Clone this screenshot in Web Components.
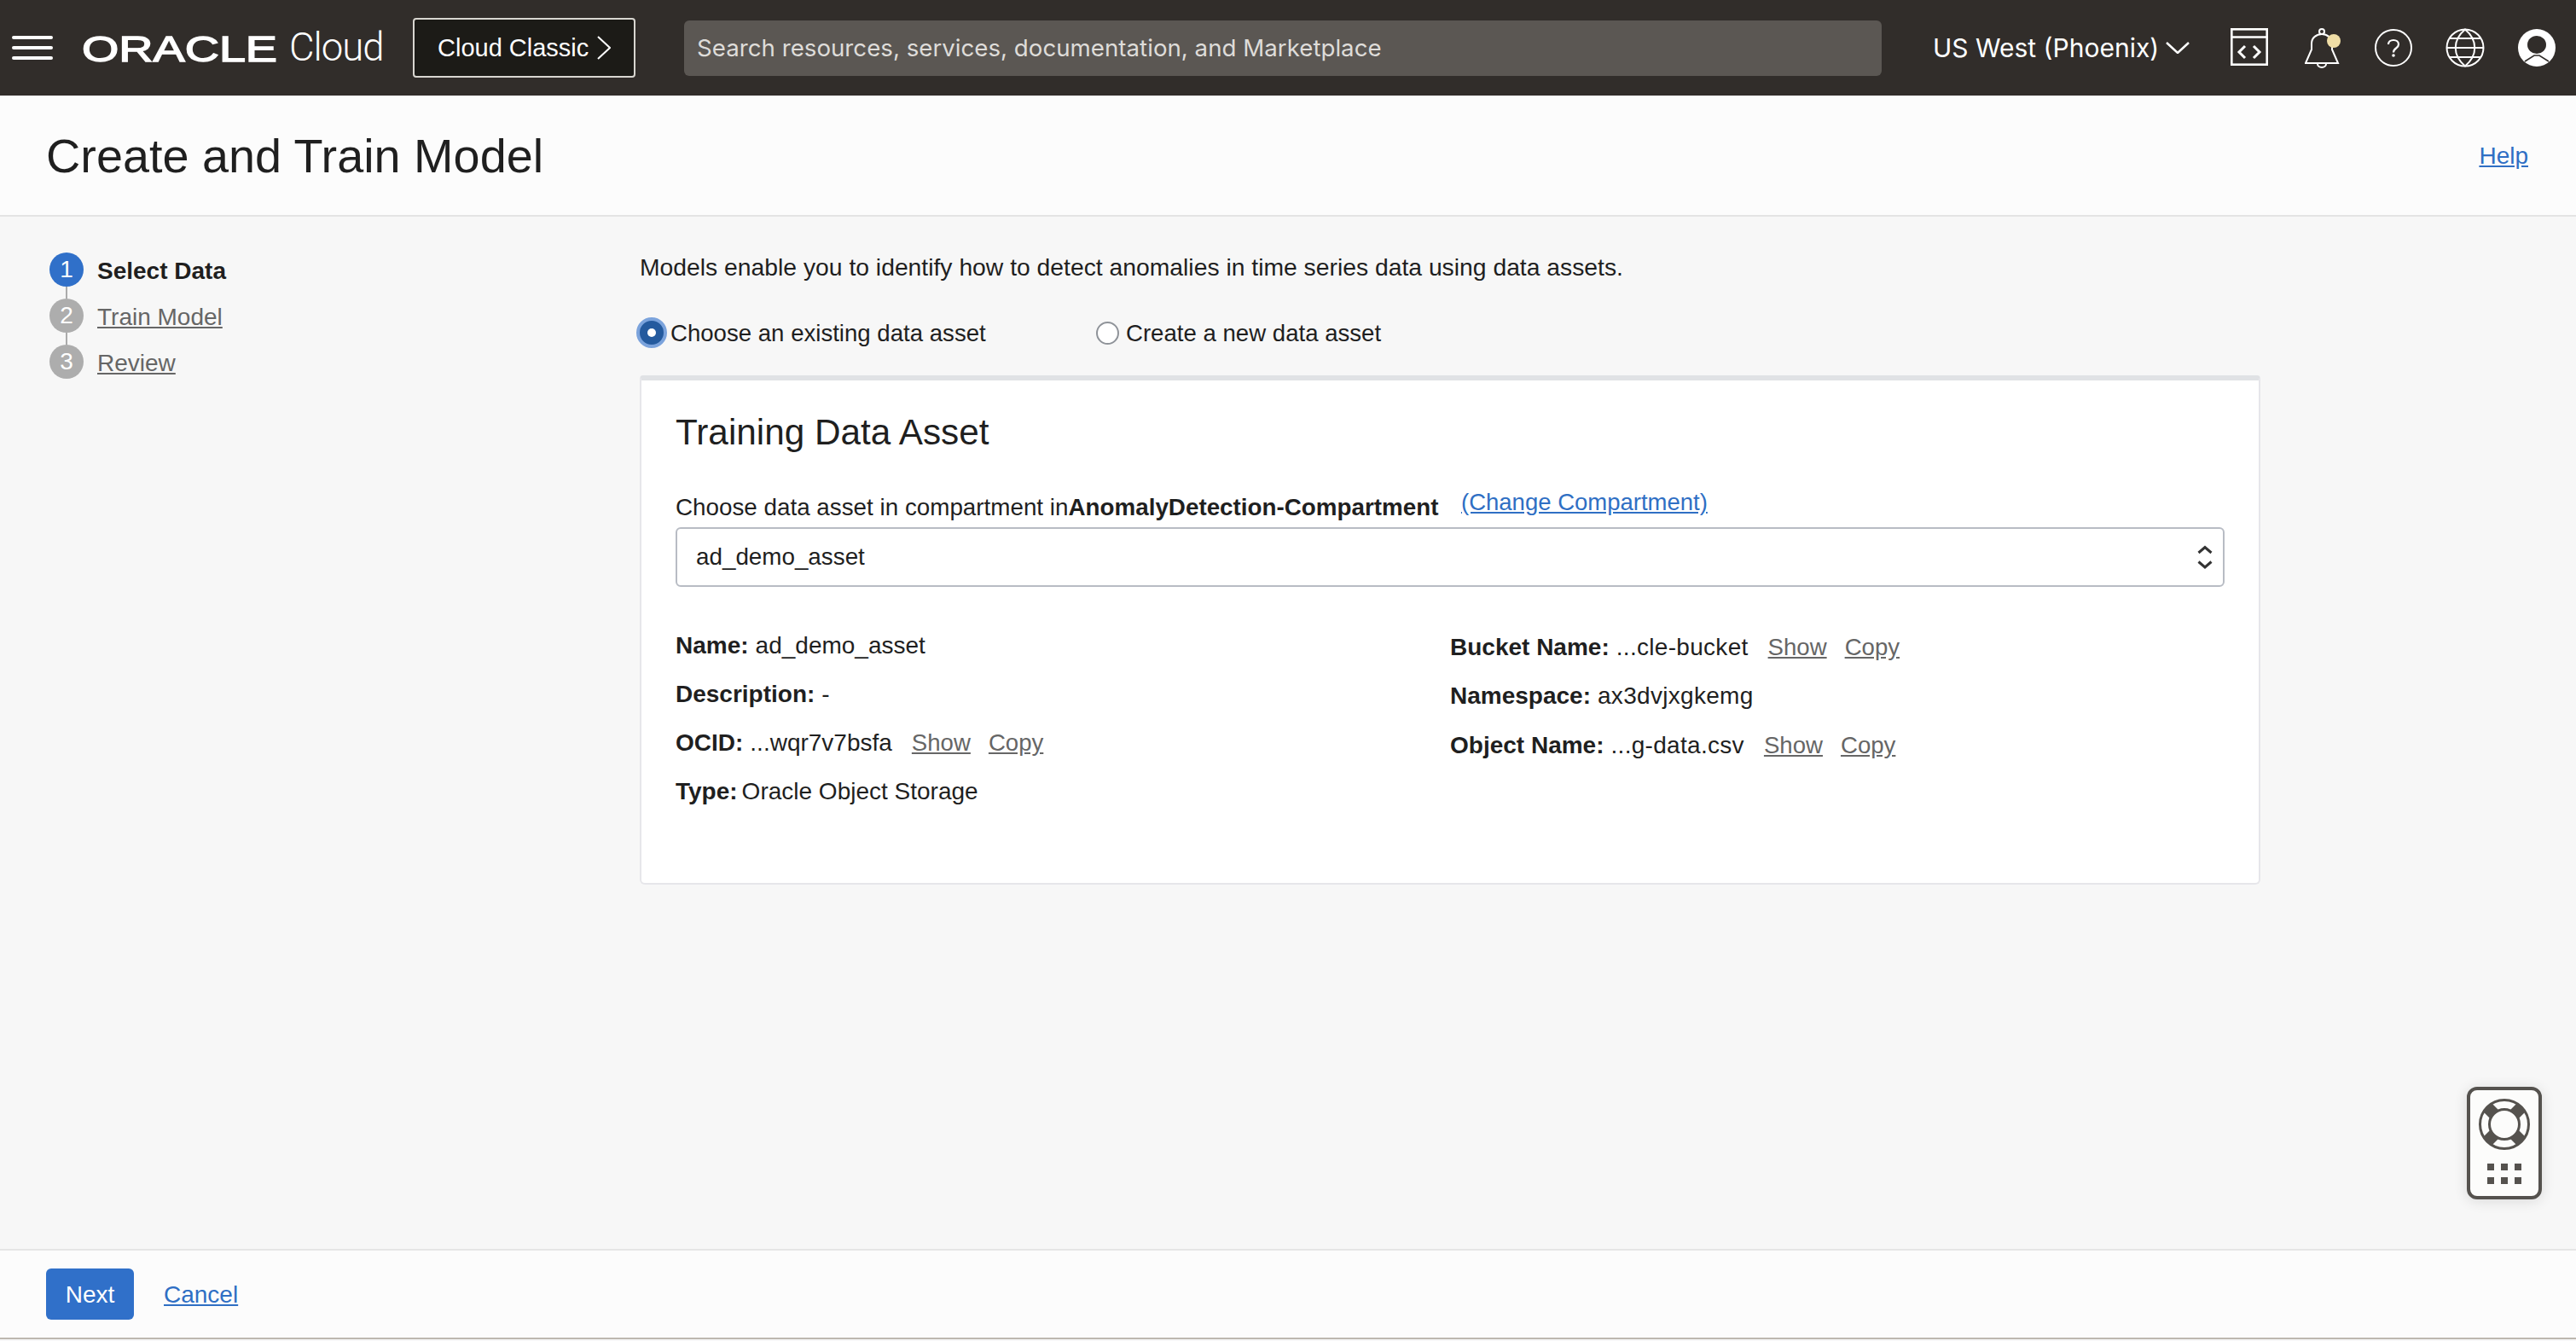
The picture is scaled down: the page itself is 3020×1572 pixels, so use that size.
<!DOCTYPE html>
<html lang="en">
<head>
<meta charset="utf-8">
<title>Create and Train Model</title>
<style>
html, body { margin: 0; height: 100%; }
body {
    display: flex;
    flex-direction: column;
    height: 1572px;
    overflow: hidden;
    background: #f7f7f7;
    color: #1f1f1f;
    font: 28px/1.2 "Liberation Sans", Arial, sans-serif;
}
</style>
</head>
<body>
<app-header></app-header>
<page-title heading="Create and Train Model"></page-title>
<wizard-layout>
    <wizard-steps slot="steps">
        <step-item num="1" label="Select Data" active></step-item>
        <step-item num="2" label="Train Model" connector></step-item>
        <step-item num="3" label="Review" connector></step-item>
    </wizard-steps>
    <data-form></data-form>
</wizard-layout>
<wizard-footer></wizard-footer>
<help-widget></help-widget>

<script>
class AppHeader extends HTMLElement {
    constructor() {
        super();
        this.attachShadow({mode: 'open'}).innerHTML = `<style>
:host {
    display: flex;
    align-items: center;
    flex: none;
    height: 112px;
    background: #312d2a;
    color: #fff;
    box-sizing: border-box;
    padding-left: 14px;
}
svg { display: block; flex: none; }
.logo { margin-left: 34px; overflow: visible; }
.cloud {
    margin-left: 8px;
    font: 300 45.5px/1 Roboto, sans-serif;
    letter-spacing: -1px;
    width: 132px;
}
.classic {
    display: flex;
    align-items: center;
    box-sizing: border-box;
    width: 261px;
    height: 70px;
    padding-left: 27px;
    background: #1c1b17;
    border: 2px solid #d8d6d0;
    border-radius: 4px;
    font-size: 29px;
    margin-left: 13px;
}
.classic svg { margin-left: 10px; }
.search {
    box-sizing: border-box;
    width: 1404px;
    height: 65px;
    margin-left: 57px;
    padding-left: 15px;
    display: flex;
    align-items: center;
    background: #5b5753;
    border-radius: 6px;
    color: #dedcd9;
    font: 27.7px Inter, sans-serif;
}
.region {
    margin-left: 60px;
    font: 30px Inter, sans-serif;
    width: 273px;
}
</style>
<svg width="48" height="28" viewBox="0 0 48 28"><g fill="#fff"><rect width="48" height="4" rx="2"/><rect y="12" width="48" height="4" rx="2"/><rect y="24" width="48" height="4" rx="2"/></g></svg>
<svg class="logo" width="235" height="44" viewBox="0 0 235 44"><text x="0" y="38" font-family="Liberation Sans" font-size="42" font-weight="400" stroke="#fff" stroke-width="1.4" fill="#fff" textLength="229" lengthAdjust="spacingAndGlyphs">ORACLE</text></svg>
<span class="cloud">Cloud</span>
<div class="classic">Cloud Classic<svg width="16" height="28" viewBox="0 0 16 28"><path d="M1 1l14 13L1 27" fill="none" stroke="#fff" stroke-width="2"/></svg></div>
<div class="search">Search resources, services, documentation, and Marketplace</div>
<span class="region">US West (Phoenix)</span>
<svg width="28" height="14" viewBox="0 0 28 14"><path d="M1 1l13 12L27 1" fill="none" stroke="#fff" stroke-width="2.5"/></svg>
<svg style="margin:-2px 0 0 48px" width="44" height="44" viewBox="0 0 44 44"><g fill="none" stroke="#fff" stroke-width="2.6"><rect x="1.3" y="1.3" width="41.4" height="41.4"/><path d="M1 10.5h42"/><path d="M17 21l-7 7 7 7M27 21l7 7-7 7" stroke-width="3"/></g></svg>
<svg style="margin-left:43px" width="44" height="48" viewBox="0 0 44 48"><g fill="none" stroke="#fff" stroke-width="2"><path d="M1 42L8 26V19C8 12 14 8 20 8S32 12 32 19V26L39 42Z"/><circle cx="20" cy="5" r="3"/><path d="M15 43a5 4 0 0 0 10 0"/></g><circle cx="34" cy="16" r="8" fill="#f0dea6"/></svg>
<svg style="margin-left:38px" width="44" height="44" viewBox="0 0 44 44"><circle cx="22" cy="22" r="21" fill="none" stroke="#fff" stroke-width="2"/><path d="M16 18c0-3 2.5-5 6-5s6 2 6 5c0 5-6 4-6 9.5" fill="none" stroke="#fff" stroke-width="2.2"/><circle cx="22" cy="31" r="1.8" fill="#fff"/></svg>
<svg style="margin-left:39px" width="46" height="46" viewBox="0 0 46 46"><g fill="none" stroke="#fff" stroke-width="2"><circle cx="23" cy="23" r="21.5"/><path d="M23 1.5C8 14 8 32 23 44.5C38 32 38 14 23 1.5Z"/><path d="M2 23h42M5 12h36M5 34h36"/></g></svg>
<svg style="margin-left:39px" width="44" height="44" viewBox="0 0 44 44"><circle cx="22" cy="22" r="22" fill="#fff"/><ellipse cx="22" cy="18.5" rx="11" ry="10.5" fill="#312d2a"/><path d="M8 38l11-7h6l11 7" fill="none" stroke="#312d2a" stroke-width="1.6"/></svg>`;
    }
}
customElements.define('app-header', AppHeader);

class PageTitle extends HTMLElement {
    connectedCallback() {
        this.attachShadow({mode: 'open'}).innerHTML = `<style>
:host {
    display: flex;
    align-items: center;
    justify-content: space-between;
    flex: none;
    box-sizing: border-box;
    height: 142px;
    padding: 2px 56px 0 54px;
    background: #fcfcfc;
    border-bottom: 2px solid #e4e4e4;
}
h1 { margin: 0; font-size: 55.8px; font-weight: 400; color: #1f1f1f; }
a { color: #2f6fc4; text-decoration: underline; }
</style>
<h1>${this.getAttribute('heading')}</h1>
<a>Help</a>`;
    }
}
customElements.define('page-title', PageTitle);

class WizardLayout extends HTMLElement {
    constructor() {
        super();
        this.attachShadow({mode: 'open'}).innerHTML = `<style>
:host {
    display: grid;
    grid-template-columns: 692px 1900px;
    flex: 1;
    padding: 42px 0 0 58px;
    min-height: 0;
}
</style>
<div><slot name="steps"></slot></div>
<div><slot></slot></div>`;
    }
}
customElements.define('wizard-layout', WizardLayout);

class WizardSteps extends HTMLElement {
    constructor() {
        super();
        this.attachShadow({mode: 'open'}).innerHTML = `<style>
:host { display: flex; flex-direction: column; }
</style><slot></slot>`;
    }
}
customElements.define('wizard-steps', WizardSteps);

class StepItem extends HTMLElement {
    connectedCallback() {
        const active = this.hasAttribute('active');
        this.attachShadow({mode: 'open'}).innerHTML = `<style>
:host { display: block; }
.line { width: 2px; height: 14px; margin-left: 19px; background: #ababab; }
.row { display: flex; align-items: center; height: 40px; }
.num {
    width: 40px;
    height: 40px;
    border-radius: 50%;
    background: ${active ? '#3070c9' : '#adadad'};
    color: #fff;
    text-align: center;
    line-height: 40px;
}
.label {
    margin-left: 16px;
    padding-top: 3px;
    font-weight: ${active ? 700 : 400};
    color: ${active ? '#1f1f1f' : '#666'};
    text-decoration: ${active ? 'none' : 'underline'};
}
</style>
${this.hasAttribute('connector') ? '<div class="line"></div>' : ''}
<div class="row"><span class="num">${this.getAttribute('num')}</span><span class="label">${this.getAttribute('label')}</span></div>`;
    }
}
customElements.define('step-item', StepItem);

class RadioOption extends HTMLElement {
    connectedCallback() {
        const checked = this.hasAttribute('checked');
        this.attachShadow({mode: 'open'}).innerHTML = `<style>
:host { display: inline-flex; align-items: center; font-size: 27.6px; }
.box { display: flex; justify-content: center; align-items: center; width: 36px; height: 36px; margin-right: 4px; }
.text { padding-top: 1px; }
.on {
    box-sizing: border-box;
    width: 36px;
    height: 36px;
    border-radius: 50%;
    background: #245a9e;
    border: 4px solid #7ba3dc;
    display: flex;
    justify-content: center;
    align-items: center;
}
.on i { width: 10px; height: 10px; border-radius: 50%; background: #fff; }
.off {
    box-sizing: border-box;
    width: 27px;
    height: 27px;
    border-radius: 50%;
    background: #fff;
    border: 2px solid #8f9399;
}
</style>
<span class="box">${checked ? '<span class="on"><i></i></span>' : '<span class="off"></span>'}</span><span class="text"><slot></slot></span>`;
    }
}
customElements.define('radio-option', RadioOption);

class ActionLink extends HTMLElement {
    constructor() {
        super();
        this.attachShadow({mode: 'open'}).innerHTML = `<style>
:host { display: inline-block; margin-left: 21px; color: #666; text-decoration: underline; font-size: 27.6px; }
:host(:first-of-type) { margin-left: 23px; }
</style><slot></slot>`;
    }
}
customElements.define('action-link', ActionLink);

class DetailRow extends HTMLElement {
    connectedCallback() {
        const gap = this.getAttribute('gap') || 8;
        this.attachShadow({mode: 'open'}).innerHTML = `<style>
:host { display: flex; align-items: center; height: var(--row-height, 57.5px); white-space: pre; }
b { margin-right: ${gap}px; }
span { letter-spacing: var(--value-spacing, 0); }
</style>
<b>${this.getAttribute('label')}</b><span>${this.getAttribute('value')}</span><slot></slot>`;
    }
}
customElements.define('detail-row', DetailRow);

class DataForm extends HTMLElement {
    constructor() {
        super();
        this.attachShadow({mode: 'open'}).innerHTML = `<style>
:host { display: block; }
p { margin: 0; height: 34px; line-height: 34px; font-size: 28.3px; }
.radios { display: flex; align-items: center; height: 36px; margin: 42px 0 32px -4px; }
.radios radio-option:first-child { width: 534px; }
.card {
    box-sizing: border-box;
    height: 597px;
    padding: 0 40px;
    background: #fff;
    border: 2px solid #e6e6ea;
    border-top: 6px solid #e0e2e5;
    border-radius: 4px 4px 6px 6px;
}
h2 { margin: 0; padding-top: 33.5px; height: 53px; font-size: 42.3px; line-height: 53px; font-weight: 400; }
.choose { display: flex; align-items: flex-end; height: 42px; margin-top: 38.5px; font-size: 27.8px; }
.choose .txt { line-height: 34px; width: 921px; padding-bottom: 1px; }
.choose a { color: #2f6fc4; text-decoration: underline; line-height: 34px; padding-bottom: 7px; font-size: 27.5px; }
.select {
    box-sizing: border-box;
    display: flex;
    align-items: center;
    justify-content: space-between;
    height: 70px;
    margin-top: 5px;
    padding: 0 12px 0 22px;
    border: 2px solid #b8bcc4;
    border-radius: 6px;
    background: #fff;
    font-size: 27.8px;
}
.select svg { display: block; }
.cols { display: grid; grid-template-columns: 908px 1fr; margin-top: 40px; }
.left { --row-height: 57px; }
.right { padding-top: 2px; --value-spacing: 0.3px; }
</style>
<p>Models enable you to identify how to detect anomalies in time series data using data assets.</p>
<div class="radios">
    <radio-option checked>Choose an existing data asset</radio-option>
    <radio-option>Create a new data asset</radio-option>
</div>
<div class="card">
    <h2>Training Data Asset</h2>
    <div class="choose">
        <span class="txt">Choose data asset in compartment in<b>AnomalyDetection-Compartment</b></span>
        <a>(Change Compartment)</a>
    </div>
    <div class="select">
        <span>ad_demo_asset</span>
        <svg width="18" height="34" viewBox="0 0 18 34"><path d="M1.5 12L9 5.5L16.5 12M1.5 22.5L9 29L16.5 22.5" fill="none" stroke="#333" stroke-width="3"/></svg>
    </div>
    <div class="cols">
        <div class="left">
            <detail-row label="Name:" value="ad_demo_asset"></detail-row>
            <detail-row label="Description:" value="-"></detail-row>
            <detail-row label="OCID:" value="...wqr7v7bsfa"><action-link>Show</action-link><action-link>Copy</action-link></detail-row>
            <detail-row label="Type:" value="Oracle Object Storage" gap="5"></detail-row>
        </div>
        <div class="right">
            <detail-row label="Bucket Name:" value="...cle-bucket"><action-link>Show</action-link><action-link>Copy</action-link></detail-row>
            <detail-row label="Namespace:" value="ax3dvjxgkemg"></detail-row>
            <detail-row label="Object Name:" value="...g-data.csv"><action-link>Show</action-link><action-link>Copy</action-link></detail-row>
        </div>
    </div>
</div>`;
    }
}
customElements.define('data-form', DataForm);

class WizardFooter extends HTMLElement {
    constructor() {
        super();
        this.attachShadow({mode: 'open'}).innerHTML = `<style>
:host {
    display: flex;
    align-items: center;
    flex: none;
    box-sizing: border-box;
    height: 106px;
    margin-bottom: 2px;
    padding: 0 0 0 54px;
    background: #fcfcfc;
    border-top: 2px solid #e6e6e6;
    border-bottom: 2px solid #bdb8b0;
}
button {
    width: 103px;
    height: 60px;
    padding: 2px 0 0;
    border: 0;
    border-radius: 6px;
    background: #3070c9;
    color: #fff;
    font: inherit;
}
a { margin-left: 35px; padding-top: 2px; color: #2f6fc4; text-decoration: underline; }
</style>
<button>Next</button><a>Cancel</a>`;
    }
}
customElements.define('wizard-footer', WizardFooter);

class HelpWidget extends HTMLElement {
    constructor() {
        super();
        this.attachShadow({mode: 'open'}).innerHTML = `<style>
:host {
    position: fixed;
    left: 2892px;
    top: 1274px;
    box-sizing: border-box;
    width: 88px;
    height: 132px;
    background: #fcfcfb;
    border: 4px solid #55524e;
    border-radius: 12px;
    box-shadow: 0 2px 16px rgba(0,0,0,0.12);
}
svg { display: block; }
</style>
<svg width="80" height="124" viewBox="0 0 80 124">
    <g transform="translate(40 40)">
        <circle r="28.5" fill="none" stroke="#55524e" stroke-width="3"/>
        <circle r="17.5" fill="none" stroke="#55524e" stroke-width="3"/>
        <g fill="none" stroke="#55524e" stroke-width="14">
            <path d="M-20-20L-12-12M20-20L12-12M-20 20L-12 12M20 20L12 12"/>
        </g>
    </g>
    <g fill="#55524e">
        <rect x="20" y="86" width="8" height="8"/><rect x="36" y="86" width="8" height="8"/><rect x="52" y="86" width="8" height="8"/>
        <rect x="20" y="102" width="8" height="8"/><rect x="36" y="102" width="8" height="8"/><rect x="52" y="102" width="8" height="8"/>
    </g>
</svg>`;
    }
}
customElements.define('help-widget', HelpWidget);
</script>
</body>
</html>
